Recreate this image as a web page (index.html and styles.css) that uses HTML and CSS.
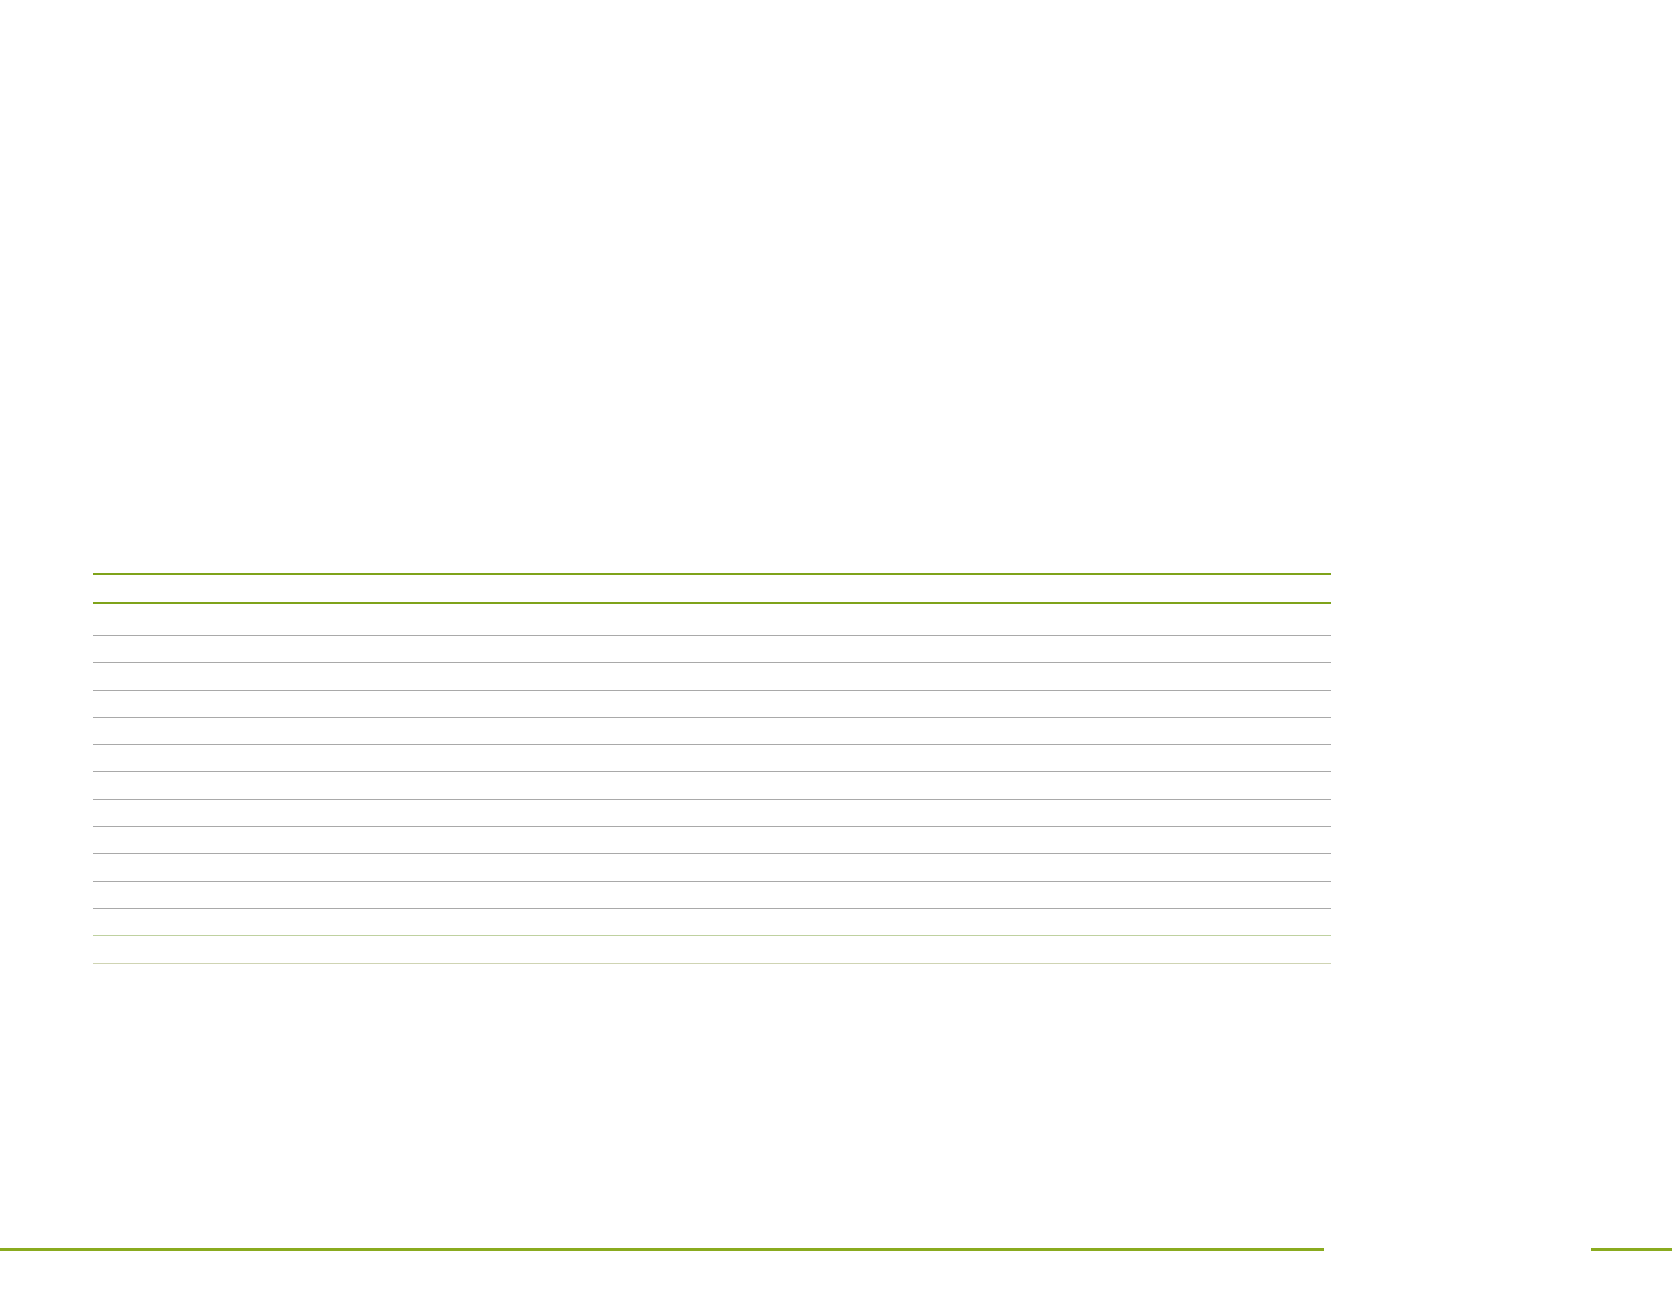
FILE: index.html
```html
<!DOCTYPE html>
<html lang="en">
<head>
<meta charset="utf-8">
<title>Table</title>
<link rel="stylesheet" href="styles.css">
</head>
<body>
<main class="page">
  <section class="grid">
    <div class="grid-head"></div>
    <div class="grid-row first"></div>
    <div class="grid-row"></div>
    <div class="grid-row"></div>
    <div class="grid-row"></div>
    <div class="grid-row"></div>
    <div class="grid-row"></div>
    <div class="grid-row"></div>
    <div class="grid-row"></div>
    <div class="grid-row"></div>
    <div class="grid-row"></div>
    <div class="grid-row"></div>
    <div class="grid-row soft"></div>
    <div class="grid-row pale"></div>
  </section>
  <footer class="foot">
    <div class="foot-line left"></div>
    <div class="foot-line right"></div>
  </footer>
</main>
</body>
</html>
```

FILE: styles.css
```css
html, body {
  margin: 0;
  padding: 0;
  background: #ffffff;
  font-family: "Liberation Sans", Arial, sans-serif;
}

.page {
  width: 1672px;
  height: 1301px;
  display: flex;
  flex-direction: column;
}

.grid {
  margin-top: 573px;
  margin-left: 93px;
  width: 1238px;
  display: flex;
  flex-direction: column;
}

.grid-head {
  height: 27px;
  border-top: 2px solid #7fa31a;
  border-bottom: 2px solid #7fa31a;
}

.grid-row {
  height: 26.3px;
  border-bottom: 1px solid #a9a9a9;
}

.grid-row.first {
  height: 31px;
}

.grid-row.soft {
  border-bottom-color: #bfd1a0;
}

.grid-row.pale {
  border-bottom-color: #cfd4b3;
}

.foot {
  margin-top: 284px;
  display: flex;
  justify-content: space-between;
}

.foot-line {
  height: 3px;
  background: #8aab1f;
}

.foot-line.left {
  width: 1324px;
}

.foot-line.right {
  width: 81px;
}
```
